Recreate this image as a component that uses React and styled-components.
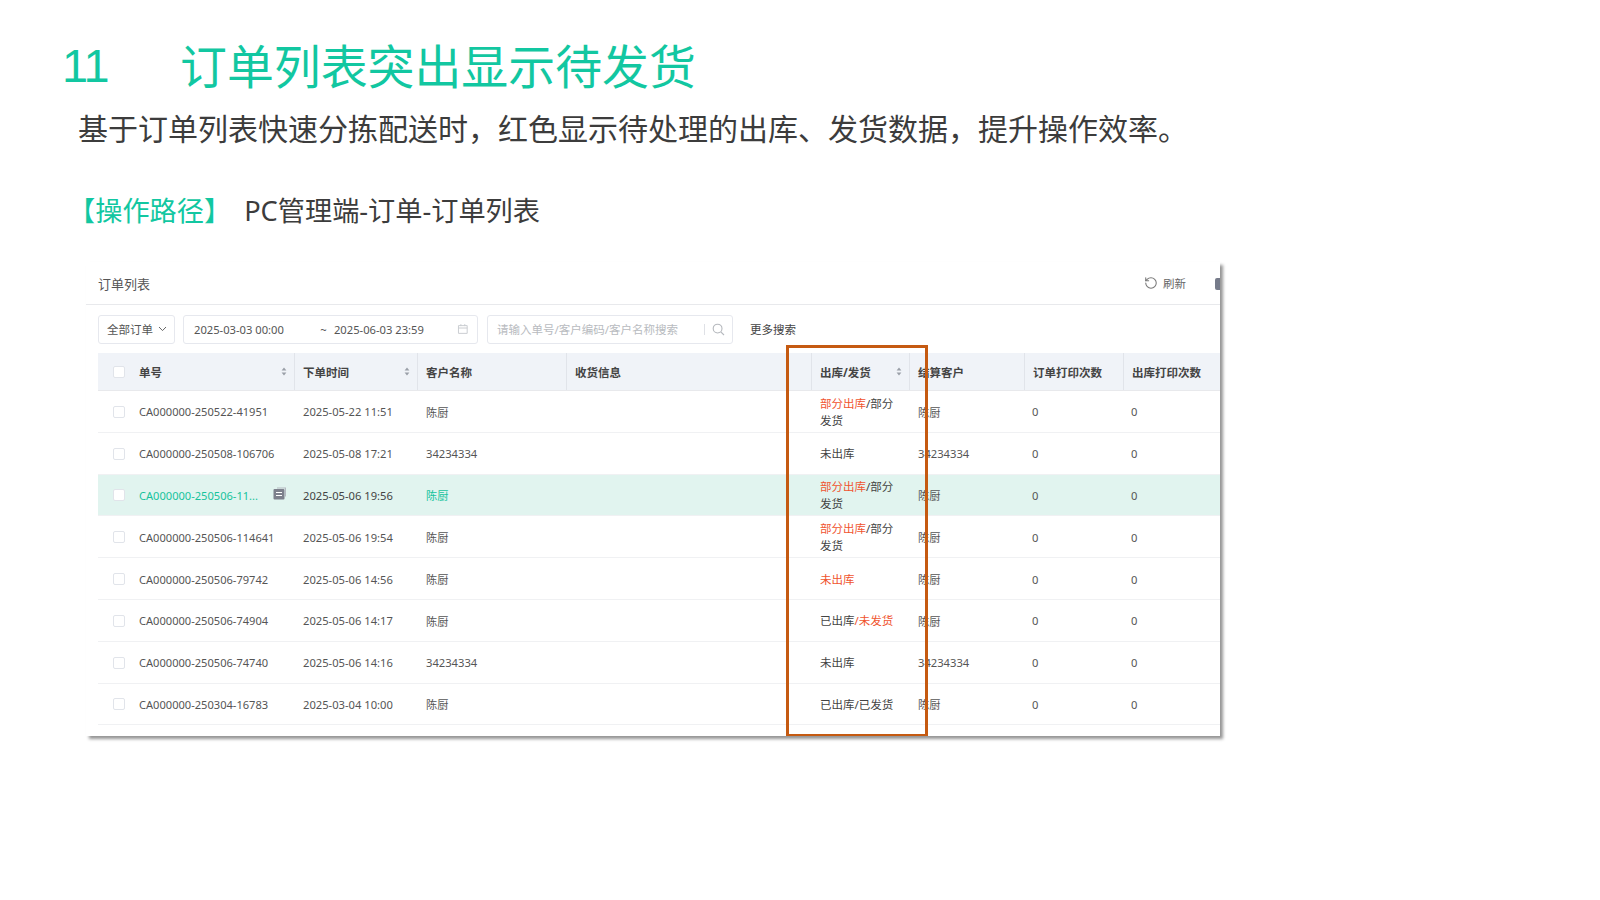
import React from "react";
import styled, { createGlobalStyle } from "styled-components";
import { RotateCcw } from "lucide-react";

const FONT = `"Noto Sans", "Noto Sans CJK SC", sans-serif`;
const COLUMNS = "196px 123px 149px 245px 98px 115px 99px 97px";

const PARTIAL = [
  [["部分出库", true], ["/部分", false]],
  [["发货", false]],
];

const ORDERS = [
  { no: "CA000000-250522-41951", time: "2025-05-22 11:51", customer: "陈厨", status: PARTIAL },
  { no: "CA000000-250508-106706", time: "2025-05-08 17:21", customer: "34234334", status: [[["未出库", false]]] },
  { no: "CA000000-250506-11...", time: "2025-05-06 19:56", customer: "陈厨", status: PARTIAL, active: true },
  { no: "CA000000-250506-114641", time: "2025-05-06 19:54", customer: "陈厨", status: PARTIAL },
  { no: "CA000000-250506-79742", time: "2025-05-06 14:56", customer: "陈厨", status: [[["未出库", true]]] },
  { no: "CA000000-250506-74904", time: "2025-05-06 14:17", customer: "陈厨", status: [[["已出库", false], ["/未发货", true]]] },
  { no: "CA000000-250506-74740", time: "2025-05-06 14:16", customer: "34234334", status: [[["未出库", false]]] },
  { no: "CA000000-250304-16783", time: "2025-03-04 10:00", customer: "陈厨", status: [[["已出库/已发货", false]]] },
];

const GlobalStyle = createGlobalStyle`
  html, body {
    margin: 0;
    background: #fff;
    font-family: ${FONT};
  }
`;

function SortIcon() {
  return (
    <svg width="6" height="9" viewBox="0 0 6 9">
      <path d="M3 0.5 L5.4 3.4 H0.6 Z M3 8.5 L5.4 5.6 H0.6 Z" fill="#9a9fa8" />
    </svg>
  );
}

function App() {
  return (
    <>
      <GlobalStyle />
      <Slide>
        <Title>
          <TitleNumber>11</TitleNumber>
          <span>订单列表突出显示待发货</span>
        </Title>
        <Intro>基于订单列表快速分拣配送时，红色显示待处理的出库、发货数据，提升操作效率。</Intro>
        <PathLine>
          <PathLabel>【操作路径】</PathLabel>
          <span>PC管理端-订单-订单列表</span>
        </PathLine>

        <Card>
          <CardHeader>
            <CardTitle>订单列表</CardTitle>
            <RefreshButton>
              <RotateCcw size={14} color="#777" strokeWidth={1.8} />
              刷新
            </RefreshButton>
            <ClippedIcon />
          </CardHeader>

          <FilterBar>
            <SelectBox>
              全部订单
              <svg width="9" height="6" viewBox="0 0 9 6" fill="none" stroke="#666" strokeWidth="1">
                <path d="M1 1 L4.5 4.6 L8 1" />
              </svg>
            </SelectBox>
            <DateBox>
              <DateValue $wide>2025-03-03 00:00</DateValue>
              <DateTilde>~</DateTilde>
              <DateValue>2025-06-03 23:59</DateValue>
              <svg width="12" height="12" viewBox="0 0 12 12" fill="none" stroke="#c9ccd1" strokeWidth="1">
                <path d="M1.5 2.5 H10.5 V10.5 H1.5 Z M1.5 5 H10.5 M4 1 V3 M8 1 V3" />
              </svg>
            </DateBox>
            <SearchBox>
              <Placeholder>请输入单号/客户编码/客户名称搜索</Placeholder>
              <SearchDivider />
              <svg width="13" height="13" viewBox="0 0 13 13" fill="none" stroke="#b5b8bd" strokeWidth="1.1">
                <circle cx="5.6" cy="5.6" r="4.4" />
                <path d="M8.8 8.8 L12 12" />
              </svg>
            </SearchBox>
            <MoreSearch>更多搜索</MoreSearch>
          </FilterBar>

          <Table>
            <HeadRow>
              <HeadCell $first>
                <Checkbox />
                <HeadLabel>单号</HeadLabel>
                <SortIcon />
              </HeadCell>
              <HeadCell>
                <HeadLabel>下单时间</HeadLabel>
                <SortIcon />
              </HeadCell>
              <HeadCell>客户名称</HeadCell>
              <HeadCell>收货信息</HeadCell>
              <HeadCell>
                <HeadLabel>出库/发货</HeadLabel>
                <SortIcon />
              </HeadCell>
              <HeadCell>结算客户</HeadCell>
              <HeadCell>订单打印次数</HeadCell>
              <HeadCell>出库打印次数</HeadCell>
            </HeadRow>
            {ORDERS.map((order) => (
              <Row key={order.no} $active={order.active}>
                <Cell $first>
                  <Checkbox />
                  <OrderNo $active={order.active}>{order.no}</OrderNo>
                  {order.active && (
                    <CopyIcon>
                      <svg width="14" height="13" viewBox="0 0 14 13">
                        <path d="M4 0.5 H13 V9.5 H12 V1.5 H4 Z" fill="#b4b7c0" />
                        <rect x="0.5" y="2" width="11" height="10.5" rx="1" fill="#7d808c" />
                        <path d="M3 5.5 H9 M3 8.5 H9" stroke="#fff" strokeWidth="1.2" />
                      </svg>
                    </CopyIcon>
                  )}
                </Cell>
                <Cell $dark={order.active}>{order.time}</Cell>
                <Cell $green={order.active}>{order.customer}</Cell>
                <Cell />
                <Cell>
                  <StatusText>
                    {order.status.map((line, i) => (
                      <div key={i}>
                        {line.map(([text, red]) => (
                          <StatusPart key={text} $red={red}>
                            {text}
                          </StatusPart>
                        ))}
                      </div>
                    ))}
                  </StatusText>
                </Cell>
                <Cell>{order.customer}</Cell>
                <CountCell>0</CountCell>
                <CountCell>0</CountCell>
              </Row>
            ))}
          </Table>

          <Highlight />
        </Card>
      </Slide>
    </>
  );
}

export default App;

const Slide = styled.div`
  width: 1600px;
  height: 900px;
  overflow: hidden;
  background: #fff;
  padding-top: 32px;
  box-sizing: border-box;
`;

const Title = styled.h1`
  display: flex;
  margin: 0 0 0 62px;
  font-size: 46.9px;
  line-height: 68px;
  font-weight: 400;
  color: #12c7a1;
`;

const TitleNumber = styled.span`
  width: 118px;
  font-family: "Liberation Sans", sans-serif;
  letter-spacing: -1px;
`;

const Intro = styled.p`
  margin: 7px 0 0 78px;
  font-size: 30px;
  line-height: 44px;
  color: #3c3c3c;
`;

const PathLine = styled.div`
  display: flex;
  gap: 13px;
  margin: 40px 0 0 68px;
  font-size: 27.2px;
  line-height: 40px;
  color: #3c3c3c;
`;

const PathLabel = styled.span`
  color: #12c7a1;
`;

const Card = styled.div`
  position: relative;
  width: 1134px;
  margin: 31px 0 0 86px;
  padding-bottom: 11px;
  background: #fff;
  box-shadow: 3px 3px 3px rgba(0, 0, 0, 0.42);
  overflow: hidden;
`;

const CardHeader = styled.div`
  display: flex;
  align-items: center;
  height: 42px;
  padding-left: 12px;
  border-bottom: 1px solid #e8e9ec;
`;

const CardTitle = styled.div`
  flex: 1;
  font-size: 13px;
  color: #555;
`;

const RefreshButton = styled.div`
  display: flex;
  align-items: center;
  gap: 5px;
  font-size: 11.5px;
  color: #666;
`;

const ClippedIcon = styled.div`
  width: 5px;
  height: 12px;
  margin: 2px 0 0 29px;
  background: #767b8a;
  border-radius: 2px 0 0 2px;
`;

const FilterBar = styled.div`
  display: flex;
  align-items: center;
  height: 48px;
  padding: 0 0 0 12px;
  font-size: 11.5px;
  color: #555;
`;

const Control = styled.div`
  display: flex;
  align-items: center;
  box-sizing: border-box;
  height: 29px;
  border: 1px solid #e6e8ee;
  border-radius: 3px;
`;

const SelectBox = styled(Control)`
  width: 77px;
  gap: 5px;
  padding-left: 8px;
`;

const DateBox = styled(Control)`
  width: 295px;
  margin-left: 8px;
  padding: 0 8px 0 10px;
  font-size: 11.2px;

  svg {
    margin-left: auto;
  }
`;

const DateValue = styled.span`
  width: ${(p) => (p.$wide ? "130px" : "127px")};
`;

const DateTilde = styled.span`
  width: 14px;
`;

const SearchBox = styled(Control)`
  width: 246px;
  margin-left: 9px;
  padding: 0 7px 0 9px;
`;

const Placeholder = styled.span`
  flex: 1;
  color: #b8bbc0;
`;

const SearchDivider = styled.span`
  width: 1px;
  height: 11px;
  margin-right: 7px;
  background: #dfe1e6;
`;

const MoreSearch = styled.span`
  margin-left: 17px;
  color: #444;
`;

const Table = styled.div`
  margin-left: 12px;
  font-size: 11.2px;
  color: #555;
`;

const HeadRow = styled.div`
  display: grid;
  grid-template-columns: ${COLUMNS};
  height: 37px;
  background: #f0f3f8;
  border-bottom: 1px solid #e8e9ec;
  font-size: 11.5px;
  font-weight: 700;
  color: #444;
`;

const HeadCell = styled.div`
  display: flex;
  align-items: center;
  padding: ${(p) => (p.$first ? "0 7px 0 15px" : "0 7px 0 8px")};
  border-left: ${(p) => (p.$first ? "none" : "1px solid #e1e4ea")};
  white-space: nowrap;
`;

const HeadLabel = styled.span`
  flex: 1;
`;

const Row = styled.div`
  display: grid;
  grid-template-columns: ${COLUMNS};
  height: 41.8px;
  box-sizing: border-box;
  padding-top: 1px;
  background: ${(p) => (p.$active ? "#e1f4ef" : "#fff")};
  border-bottom: 1px solid #f0f1f3;
`;

const Cell = styled.div`
  display: flex;
  align-items: center;
  padding: ${(p) => (p.$first ? "0 8px 0 15px" : "0 9px")};
  white-space: nowrap;
  color: ${(p) => (p.$green ? "#16c39c" : p.$dark ? "#444" : "inherit")};
`;

const CountCell = styled(Cell)`
  padding-left: 8px;
`;

const StatusText = styled.div`
  font-size: 11.5px;
  line-height: 17px;
`;

const StatusPart = styled.span`
  color: ${(p) => (p.$red ? "#f0542f" : "#444")};
`;

const Checkbox = styled.span`
  flex: none;
  box-sizing: border-box;
  width: 12px;
  height: 12px;
  margin-right: 14px;
  background: #fff;
  border: 1px solid #e1e4ea;
  border-radius: 2px;
`;

const OrderNo = styled.span`
  font-size: 11.1px;
  color: ${(p) => (p.$active ? "#16c39c" : "inherit")};
`;

const CopyIcon = styled.span`
  display: flex;
  margin: -4px 0 0 15px;
`;

const Highlight = styled.div`
  position: absolute;
  top: 83px;
  left: 700px;
  bottom: 0;
  width: 142px;
  box-sizing: border-box;
  border: 3.5px solid #c55a11;
  border-bottom-width: 2px;
`;
